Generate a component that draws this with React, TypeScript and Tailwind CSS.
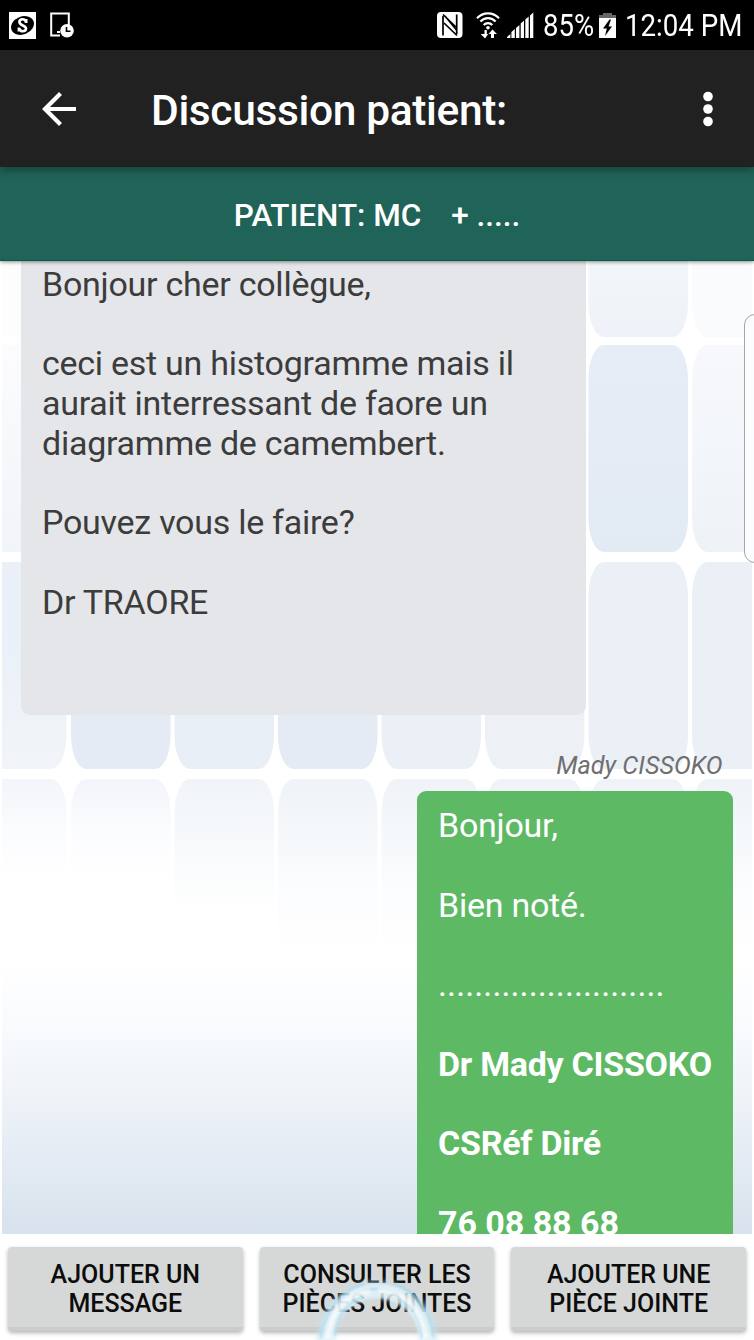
import { clsx } from "clsx";

const received = [
  "Bonjour cher collègue,",
  "",
  "ceci est un histogramme mais il",
  "aurait interressant de faore un",
  "diagramme de camembert.",
  "",
  "Pouvez vous le faire?",
  "",
  "Dr TRAORE",
];

const actions = [
  ["AJOUTER UN", "MESSAGE"],
  ["CONSULTER LES", "PIÈCES JOINTES"],
  ["AJOUTER UNE", "PIÈCE JOINTE"],
];

// pale rounded tile: x, y, width, height and fill
const tiles: [number, number, number, number, string][] = [
  [-33, -131, 99, 207, "#fdfdfe"],
  [588.5, -131, 99.5, 207, "url(#tileTop)"],
  [692, -131, 99, 207, "#fafbfd"],
  [-33, 84, 99, 207, "url(#tileLeft)"],
  [588.5, 84, 99.5, 207, "url(#tileBlue)"],
  [692, 84, 99, 207, "url(#tileRight)"],
  [-33, 301, 99.5, 207, "url(#tileLeftLow)"],
  [71, 301, 99.5, 207, "#e4ebf4"],
  [174.5, 301, 99.5, 207, "#e9eff6"],
  [278, 301, 99.5, 207, "#e4ebf4"],
  [381.5, 301, 99.5, 207, "#ebf0f6"],
  [485, 301, 99.5, 207, "#edf1f6"],
  [588.5, 301, 99.5, 207, "#ebf0f6"],
  [692, 301, 99, 207, "#ebf0f7"],
  [-33, 518, 99.5, 207, "url(#fadeA)"],
  [71, 518, 99.5, 207, "url(#fadeA)"],
  [174.5, 518, 99.5, 207, "url(#fadeB)"],
  [278, 518, 99.5, 207, "url(#fadeC)"],
  [381.5, 518, 99.5, 207, "url(#fadeC)"],
  [485, 518, 99.5, 207, "url(#fadeC)"],
  [588.5, 518, 99.5, 207, "url(#fadeC)"],
  [692, 518, 99, 207, "url(#fadeC)"],
];

function tilePath(x: number, y: number, w: number, h: number) {
  const r = x + w;
  const b = y + h;
  return `M${x + 16} ${y}H${r - 16}C${r - 5} ${y} ${r} ${y + 19} ${r} ${y + 34}V${b - 34}C${r} ${b - 19} ${r - 5} ${b} ${r - 16} ${b}H${x + 16}C${x + 5} ${b} ${x} ${b - 19} ${x} ${b - 34}V${y + 34}C${x} ${y + 19} ${x + 5} ${y} ${x + 16} ${y}Z`;
}

function Gradient({ id, stops }: { id: string; stops: [number, string][] }) {
  return (
    <linearGradient id={id} x1="0" y1="0" x2="0" y2="1">
      {stops.map(([offset, color]) => (
        <stop key={offset} offset={offset} stopColor={color} />
      ))}
    </linearGradient>
  );
}

function Wallpaper() {
  return (
    <svg className="absolute inset-0" width="754" height="973" viewBox="0 0 754 973">
      <defs>
        <Gradient id="tileTop" stops={[[0.6, "#f3f7fa"], [1, "#eef2f8"]]} />
        <Gradient id="tileLeft" stops={[[0, "#fcfcfe"], [1, "#f1f4fa"]]} />
        <Gradient id="tileBlue" stops={[[0, "#e7edf6"], [1, "#e2eaf3"]]} />
        <Gradient id="tileRight" stops={[[0, "#f7f9fc"], [1, "#eef2f7"]]} />
        <Gradient id="tileLeftLow" stops={[[0, "#eaf0f8"], [0.5, "#ebf1f8"], [1, "#f1f5f9"]]} />
        <Gradient id="fadeA" stops={[[0, "#f2f5fa"], [0.25, "#fbfcfe"], [0.5, "#ffffff"]]} />
        <Gradient id="fadeB" stops={[[0, "#f0f4f9"], [0.35, "#f8fafc"], [0.65, "#ffffff"]]} />
        <Gradient id="fadeC" stops={[[0, "#eff3f8"], [0.25, "#f4f8fa"], [0.5, "#fbfcfe"], [0.85, "#ffffff"]]} />
        <Gradient id="floor" stops={[[0, "#ffffff"], [0.25, "#f8fafd"], [0.5, "#eef3f8"], [0.75, "#e3eaf3"], [1, "#d8e2ec"]]} />
      </defs>
      <rect width="754" height="973" fill="#fff" />
      <rect x="2" y="700" width="750" height="273" fill="url(#floor)" />
      <svg x="2" width="750" height="700" viewBox="2 0 750 700">
        {tiles.map(([x, y, w, h, fill], i) => (
          <path key={i} d={tilePath(x, y, w, h)} fill={fill} />
        ))}
      </svg>
    </svg>
  );
}

function StatusBar() {
  return (
    <div className="flex h-[50px] items-center bg-black text-white">
      <svg className="ml-[9px] shrink-0" width="27" height="27" viewBox="0 0 27 27">
        <rect width="27" height="27" fill="#fff" />
        <ellipse cx="13.5" cy="13.5" rx="11.8" ry="8.9" transform="rotate(-22 13.5 13.5)" />
        <path
          d="M17.2 10.6C16.6 8.2 15.4 7.2 13.6 7.2c-2 0-3.2 1.1-3.2 2.8 0 3.6 6.6 3.4 6.6 6.6 0 1.7-1.4 2.7-3.2 2.7-2 0-3.4-1.2-3.9-3.4M17.2 7v4M9.9 15.6v4"
          fill="none"
          stroke="#fff"
          strokeWidth="2.6"
        />
      </svg>
      <svg className="ml-[14px] shrink-0" width="25" height="26" viewBox="0 0 25 26">
        <path d="M10 23.5H1.2V1.5h17.6V13" fill="none" stroke="#fff" strokeWidth="2" />
        <path d="M7 19h3v2H7z" fill="#fff" />
        <circle cx="17" cy="18.7" r="6.8" fill="#fff" />
        <path d="M16.5 15v4.2h4" fill="none" stroke="#000" strokeWidth="1.6" />
      </svg>
      <svg className="ml-[361.5px] shrink-0" width="26" height="26" viewBox="0 0 26 26">
        <rect width="25.5" height="26" rx="4" fill="#fff" />
        <path d="M6 23.5V4M19.7 2.5V22" fill="none" stroke="#000" strokeWidth="1.7" />
        <path d="M6 2.5 19 15M7 11l13 12.5M8 4l11.5 14" fill="none" stroke="#000" strokeWidth="1.7" />
      </svg>
      <svg className="ml-[13px] shrink-0" width="24" height="27" viewBox="0 0 24 27" fill="none" stroke="#fff">
        <path d="M1 6.2C7-.3 17-.3 23 6.2M4.4 9.6c4.3-4.6 10.9-4.6 15.2 0M7.7 13c2.5-2.6 6.1-2.6 8.6 0" strokeWidth="2.2" />
        <circle cx="12" cy="15.7" r="1.8" fill="#fff" stroke="none" />
        <path d="M8.5 18v4H4.7L9 26.5l3.2-4.5h-1.4v-4ZM15 26v-4h-2.5l4-4.5L21 22h-3v4Z" fill="#fff" stroke="none" />
      </svg>
      <svg className="ml-[7px] shrink-0" width="27" height="27" viewBox="0 0 27 27" fill="#fff">
        <path d="M0 26v-1l3.4-3v4ZM4.4 26v-6l3.4-3v9ZM9 26V16l3.4-3v13ZM13.7 26V11.5l3.3-3V26ZM18.3 26V7.5l3.4-3V26ZM23 26V3.5L26.3.5V26Z" />
      </svg>
      <span className="ml-[9px] w-[50px] shrink-0 origin-left scale-x-[0.86] text-[32px] leading-[50px] whitespace-nowrap">
        85%
      </span>
      <svg className="ml-[6px] shrink-0" width="17" height="27" viewBox="0 0 17 27">
        <path d="M4 1h9v2h4v3.5H0V3h4Z" fill="#666" />
        <path d="M0 6h17v20H0Z" fill="#fff" />
        <path d="M10.5 7.5 4 16.5h3.8L6 24l7-9.5H9.5l2.5-7Z" />
      </svg>
      <span className="ml-[9px] shrink-0 origin-left scale-x-[0.865] text-[32px] leading-[50px] whitespace-nowrap">
        12:04 PM
      </span>
    </div>
  );
}

function TouchRing() {
  return (
    <svg className="absolute bottom-0 left-[306px]" width="144" height="70" viewBox="0 0 144 70" fill="none">
      <defs>
        <filter id="glow" x="-20%" y="-20%" width="140%" height="140%">
          <feGaussianBlur stdDeviation="2.4" />
        </filter>
        <filter id="soft" x="-20%" y="-20%" width="140%" height="140%">
          <feGaussianBlur stdDeviation="1.3" />
        </filter>
      </defs>
      <ellipse cx="71" cy="69" rx="51" ry="49" stroke="#c2e5f2" strokeOpacity="0.6" strokeWidth="18" filter="url(#glow)" />
      <ellipse cx="71" cy="69" rx="49" ry="48" stroke="#eef9fe" strokeOpacity="0.6" strokeWidth="14" filter="url(#soft)" />
      <path d="M15 68C18 44 34 20 58 14M88 14c20 5 37 28 39 53M29 66c1-20 12-33 27-39M92 29c18 8 23 23 24 39M50 24c14-7 30-7 44 1" stroke="#93d3ec" strokeWidth="1.6" strokeOpacity="0.8" filter="url(#soft)" />
      <path d="M22 68C25 42 39 24 64 21M72 20c26 0 43 19 48 48" stroke="#fff" strokeWidth="5" strokeOpacity="0.6" filter="url(#soft)" />
    </svg>
  );
}

export default function App() {
  return (
    <div className="relative flex h-[1340px] w-[754px] flex-col overflow-hidden bg-white font-[Roboto,sans-serif]">
      <StatusBar />
      <header className="relative z-20 flex h-[117px] items-center bg-[#212121] text-white shadow-[0_3px_8px_rgba(0,0,0,0.35)]">
        <svg className="ml-[42px]" width="35" height="34" viewBox="0 0 35 34" fill="none" stroke="#fff" strokeWidth="4.2">
          <path d="M34 17H3M18.5 1.5 3 17l15.5 15.5" />
        </svg>
        <h1 className="ml-[74px] pt-[5px] text-[42.5px] font-medium tracking-[-0.36px] whitespace-nowrap">
          Discussion patient:
        </h1>
        <svg className="mr-[40px] ml-auto" width="12" height="36" viewBox="0 0 12 36" fill="#fff">
          <circle cx="6" cy="5.5" r="4.8" />
          <circle cx="6" cy="18" r="4.8" />
          <circle cx="6" cy="30.5" r="4.8" />
        </svg>
      </header>
      <div className="relative z-10 flex h-[94px] items-center justify-center gap-[30px] border-b border-[#075846] bg-[#206358] pt-[4px] text-[31.5px] font-medium text-white shadow-[0_1px_4px_rgba(0,0,0,0.45)]">
        <span className="tracking-[-0.05px]">PATIENT: MC</span>
        <span>+ .....</span>
      </div>

      <main className="relative h-[973px] overflow-hidden">
        <Wallpaper />
        <div className="relative flex flex-col">
          <div className="ml-[21px] h-[454px] w-[565px] rounded-b-[9px] bg-[#e5e6ea] pt-[3.5px] pl-[21px] text-[34px] leading-[39.75px] tracking-[-0.26px] text-[#3c3c3c]">
            {received.map((line, i) => (
              <p key={i} className="h-[39.75px] whitespace-nowrap">{line}</p>
            ))}
          </div>
          <p className="mt-[36px] mr-[31.5px] self-end text-[25.2px] leading-[30px] text-[#6f6f6f] italic">Mady CISSOKO</p>
          <div className="mt-[10px] mr-[21px] flex h-[500px] w-[316px] flex-col gap-[39.75px] self-end rounded-t-[9px] bg-[#5eb965] pt-[15px] pl-[21px] text-[34px] leading-[39.75px] tracking-[-0.26px] whitespace-nowrap text-white">
            <p>Bonjour,</p>
            <p>Bien noté.</p>
            <p className="tracking-[0.1px]">.........................</p>
            <p className="font-bold">Dr Mady CISSOKO</p>
            <p className="font-bold">CSRéf Diré</p>
            <p className="font-bold tracking-[-0.05px]">76 08 88 68</p>
          </div>
        </div>
        {/* edge panel handle */}
        <div className="absolute top-[53px] -right-[12px] h-[249px] w-[22px] rounded-[12px] border border-[#a5a5a5] bg-[#fbfcfd]" />
      </main>

      <footer className="flex h-[106px] gap-[17px] bg-white px-[8px] pt-[13px]">
        {actions.map(([top, bottom], i) => (
          <button
            key={top}
            className={clsx(
              "flex h-[84px] flex-1 flex-col items-center justify-center rounded-[4px] border-b-[4px] border-[#cbcdcc] bg-[#d6d8d7] pt-[4px]",
              "text-[25px] leading-[29px] font-medium text-[#0c0c0c] shadow-[0_2px_4px_rgba(0,0,0,0.3)]",
              i === 1 && "whitespace-nowrap",
            )}
          >
            <span>{top}</span>
            <span>{bottom}</span>
          </button>
        ))}
      </footer>
      <TouchRing />
    </div>
  );
}
